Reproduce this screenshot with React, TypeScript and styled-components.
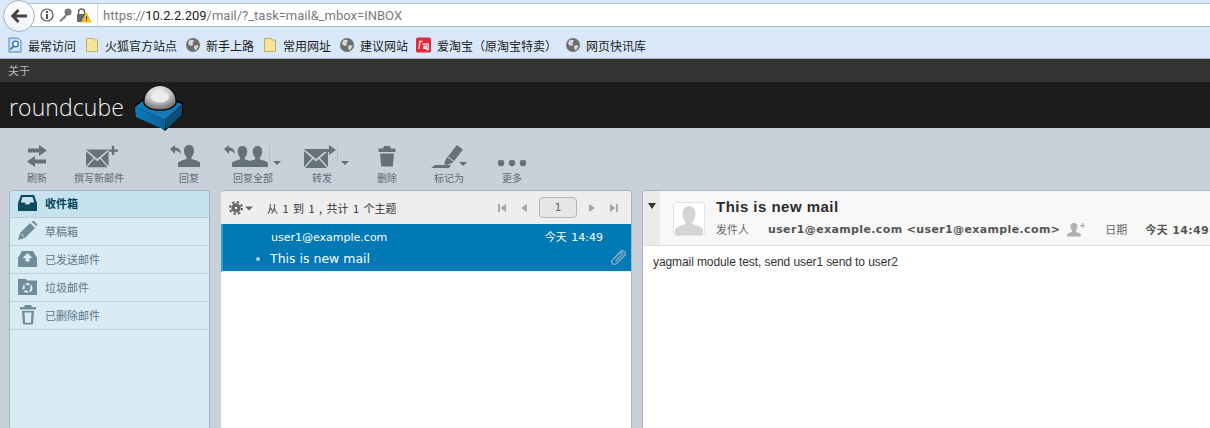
import React from 'react';
import styled, { createGlobalStyle } from 'styled-components';

const GlobalStyle = createGlobalStyle`
  html, body {
    margin: 0;
    padding: 0;
    background: #c8d1da;
    overflow: hidden;
  }
  * { box-sizing: border-box; }
`;

const CJK = `"DejaVu Sans", "Noto Sans CJK SC", sans-serif`;

const Page = styled.div`
  width: 1210px;
  height: 428px;
  overflow: hidden;
  font-family: ${CJK};
  display: flex;
  flex-direction: column;
`;

/* browser chrome */
const NavBar = styled.div`
  height: 27px;
  background: #dce9f7;
  padding-top: 3px;
  padding-left: 20px;
  position: relative;
`;

const UrlBar = styled.div`
  height: 24px;
  background: #fff;
  border-top: 1px solid #aebfd2;
  border-bottom: 1px solid #a3b5c9;
  display: flex;
  align-items: center;
  padding-left: 20px;
`;

const BackButton = styled.div`
  position: absolute;
  left: 3px;
  top: 0;
  width: 32px;
  height: 32px;
  border-radius: 50%;
  background: linear-gradient(#fff, #eef2f7);
  border: 1px solid #9fb2c8;
  display: flex;
  align-items: center;
  justify-content: center;
  z-index: 2;
`;

const UrlIcons = styled.div`
  display: flex;
  align-items: center;
  gap: 4px;
  width: 58px;
  height: 22px;
  border-right: 1px solid #d6d6d6;
  margin-right: 5px;
`;

const UrlText = styled.div`
  font-family: "Roboto", sans-serif;
  font-size: 13px;
  color: #7a7a80;
  white-space: nowrap;
  b {
    font-weight: 400;
    color: #222;
  }
`;

const BookmarkBar = styled.div`
  height: 32px;
  background: #d9e8f8;
  border-bottom: 1px solid #a6b4c2;
  display: flex;
  align-items: center;
  gap: 9px;
  padding-left: 8px;
  padding-top: 5px;
`;

const Bookmark = styled.div<{ $gap?: number }>`
  display: flex;
  align-items: center;
  gap: 6px;
  margin-left: ${p => p.$gap ?? 0}px;
  font-family: "Noto Sans CJK SC", sans-serif;
  font-size: 12px;
  color: #1a1a1a;
  white-space: nowrap;
`;

/* page header */
const AboutBar = styled.div`
  height: 23px;
  background: #353535;
  color: #b9b9b9;
  font-family: "Noto Sans CJK SC", sans-serif;
  font-size: 11px;
  line-height: 23px;
  padding-left: 8px;
`;

const Header = styled.div`
  height: 46px;
  flex: none;
  background: #1c1c1c;
  display: flex;
  align-items: flex-start;
  padding-left: 9px;
  padding-top: 3px;
`;

const LogoText = styled.span`
  width: 125px;
  flex: none;
  font-family: "Open Sans", sans-serif;
  font-weight: 300;
  font-size: 23px;
  line-height: 44px;
  letter-spacing: 0.1px;
  color: #f0f0f0;
`;

const LogoMark = styled.svg`
  overflow: visible;
  flex: none;
  position: relative;
  z-index: 3;
`;

/* toolbar */
const Toolbar = styled.div`
  height: 62px;
  flex: none;
  display: flex;
  padding-left: 10px;
`;

const ToolButton = styled.div<{ $width: number; $gap?: number }>`
  width: ${p => p.$width}px;
  margin-left: ${p => p.$gap ?? 0}px;
  display: flex;
  flex-direction: column;
  align-items: center;
  padding-top: 14px;
  position: relative;
  svg { display: block; }
`;

const IconSlot = styled.div<{ $shift?: number }>`
  height: 28px;
  display: flex;
  align-items: center;
  justify-content: center;
  margin-right: ${p => p.$shift ?? 0}px;
`;

const ToolLabel = styled.span`
  font-family: "Noto Sans CJK SC", sans-serif;
  font-size: 10px;
  line-height: 14px;
  margin-top: 1px;
  color: #5f6a72;
  white-space: nowrap;
`;

const DropArrow = styled.i<{ $right: number; $top?: number }>`
  position: absolute;
  right: ${p => p.$right}px;
  top: ${p => p.$top ?? 33}px;
  width: 0;
  height: 0;
  border-left: 4px solid transparent;
  border-right: 4px solid transparent;
  border-top: 4px solid #5f6a72;
`;

const Separator = styled.i<{ $right: number }>`
  position: absolute;
  right: ${p => p.$right}px;
  top: 13px;
  height: 26px;
  width: 1px;
  background: linear-gradient(#c8d1da, #aab4bc, #c8d1da);
`;

const Dots = styled.svg`
  margin-top: 14px;
`;

/* three panes */
const Panes = styled.div`
  flex: 1;
  display: flex;
  padding-left: 9px;
  min-height: 0;
`;

const FolderPane = styled.div`
  width: 201px;
  flex: none;
  background: #d9ebf3;
  border: 1px solid #aab4bc;
  border-bottom: none;
  border-radius: 4px 4px 0 0;
  overflow: hidden;
`;

const FolderRow = styled.div<{ $selected?: boolean }>`
  height: 28px;
  display: flex;
  align-items: center;
  gap: 8px;
  padding: 0 0 2px 8px;
  background: ${p => (p.$selected ? '#c6e2ef' : 'transparent')};
  border-bottom: 1px solid #bcd0d9;
  font-family: "Noto Sans CJK SC", sans-serif;
  font-size: 11px;
  font-weight: ${p => (p.$selected ? 700 : 400)};
  color: ${p => (p.$selected ? '#004458' : '#5b7886')};
  &:first-child {
    height: 27px;
  }
`;

const FolderIcon = styled.span`
  width: 19px;
  height: 22px;
  display: flex;
  align-items: center;
  justify-content: center;
  flex: none;
`;

const ListPane = styled.div`
  width: 411px;
  flex: none;
  margin-left: 11px;
  background: #fff;
  border: 1px solid #aab4bc;
  border-left: none;
  border-bottom: none;
  border-radius: 4px 4px 0 0;
  overflow: hidden;
`;

const ListToolbar = styled.div`
  height: 33px;
  background: #eeeeee;
  display: flex;
  align-items: center;
  padding-left: 8px;
`;

const ListCount = styled.span`
  margin-left: 14px;
  font-family: "Noto Sans CJK SC", sans-serif;
  font-size: 11px;
  word-spacing: 2px;
  color: #333;
  flex: 1;
`;

const Pager = styled.div`
  display: flex;
  align-items: center;
  margin-right: 12px;
`;

const PagerIcon = styled.svg<{ $gap?: number }>`
  margin-right: ${p => p.$gap ?? 0}px;
`;

const PageBox = styled.span`
  width: 38px;
  height: 21px;
  margin: 0 11px;
  border: 1px solid #b4b4b4;
  border-radius: 4px;
  background: #e6e6e6;
  text-align: center;
  font-size: 11px;
  line-height: 19px;
  color: #666;
`;

const MessageRow = styled.div`
  height: 48px;
  background: #0079b5;
  border-left: 2px solid #28a5cf;
  border-bottom: 1px solid #e8f0f4;
  color: #fff;
  position: relative;
`;

const SenderLine = styled.div`
  display: flex;
  justify-content: space-between;
  padding: 6px 28px 0 48px;
  font-size: 11px;
  line-height: 15px;
  word-spacing: 1px;
`;

const SubjectLine = styled.div`
  display: flex;
  align-items: center;
  padding: 5px 0 0 33px;
  font-size: 12.5px;
  line-height: 18px;
  &::before {
    content: '';
    width: 4px;
    height: 4px;
    border-radius: 50%;
    background: #a9d3e6;
    margin-right: 10px;
  }
`;

const Clip = styled.svg`
  position: absolute;
  right: 4px;
  top: 24px;
`;

const PreviewPane = styled.div`
  width: 580px;
  flex: none;
  margin-left: 10px;
  background: #fff;
  border: 1px solid #aab4bc;
  border-right: none;
  border-bottom: none;
  border-radius: 4px 0 0 0;
  overflow: hidden;
`;

const PreviewHeader = styled.div`
  height: 55px;
  background: #f8f8f8;
  border-bottom: 1px solid #dcdcdc;
  display: flex;
`;

const Toggle = styled.div`
  width: 17px;
  flex: none;
  background: #ebebeb;
  padding: 12px 0 0 5px;
  &::before {
    content: '';
    display: block;
    width: 0;
    height: 0;
    border-left: 4px solid transparent;
    border-right: 4px solid transparent;
    border-top: 6px solid #333;
  }
`;

const Avatar = styled.div`
  width: 32px;
  height: 34px;
  flex: none;
  margin: 11px 11px 0 13px;
  background: #fff;
  border: 1px solid #e2e2e2;
  border-radius: 3px;
  overflow: hidden;
`;

const HeaderText = styled.div`
  flex: 1;
  min-width: 0;
`;

const Subject = styled.div`
  font-family: "Liberation Sans", sans-serif;
  font-size: 15px;
  font-weight: 700;
  line-height: 18px;
  margin-top: 7px;
  letter-spacing: 0.47px;
  color: #2c2c2c;
`;

const HeaderMeta = styled.div`
  display: flex;
  align-items: center;
  margin-top: 4px;
  height: 18px;
  white-space: nowrap;
`;

const MetaLabel = styled.span<{ $width: number }>`
  width: ${p => p.$width}px;
  flex: none;
  font-family: "Noto Sans CJK SC", sans-serif;
  font-size: 11px;
  color: #666;
`;

const MetaValue = styled.span`
  flex: none;
  font-size: 11px;
  font-weight: 700;
  letter-spacing: 0.37px;
  color: #555;
`;

const AddContact = styled.svg`
  margin: 0 20px 0 7px;
  flex: none;
`;

const MessageBody = styled.div`
  padding: 8px 10px;
  font-family: "Liberation Sans", sans-serif;
  font-size: 12px;
  letter-spacing: -0.09px;
  line-height: 16px;
  color: #333;
`;

/* drawings */
const Globe = () => (
  <svg width="14" height="14" viewBox="0 0 14 14">
    <circle cx="7" cy="7" r="7" fill="#6e6e6e" />
    <path d="M3 2.500c2-1 4-1 5 0L6.500 5 7 7 4.500 8 2 6zM8 8l3-1 1.500 1L10 12.500 8.500 11z" fill="#d8d8d8" />
  </svg>
);

const Folder = () => (
  <svg width="14" height="16" viewBox="0 0 14 16">
    <path d="M1.500 1.500h7l1 1.500h3v11.500h-11z" fill="#f5e59b" stroke="#c2ac5e" />
  </svg>
);

const ReplyArrow = ({ x, y }: { x: number; y: number }) => (
  <path
    transform={`translate(${x} ${y})`}
    d="M0 4 5 0v2.500c4 .2 6 2.800 6 7-1-2.500-3-3.700-6-3.700V9z"
    fill="#66727a"
  />
);

const Person = ({ x, y, s = 1 }: { x: number; y: number; s?: number }) => (
  <path
    transform={`translate(${x} ${y}) scale(${s})`}
    d="M11 0c3 0 5 2 5 5.500 0 3-1 5-2.500 6.500v2c3 1 7 2 8.500 3.500V22H0v-4.500C1.500 16 5.500 15 8.500 14v-2C7 10.500 6 8.500 6 5.500 6 2 8 0 11 0z"
    fill="#66727a"
  />
);

const Envelope = ({ x = 0, y = 0 }: { x?: number; y?: number }) => (
  <g transform={`translate(${x} ${y})`}>
    <path d="M0 0h24L12 10z" fill="#66727a" />
    <path d="M0 2v16l8-9zM24 2v16l-8-9zM1 19h22l-8-9-3 2.500L9 10z" fill="#66727a" />
  </g>
);

export default function App() {
  return (
    <Page>
      <GlobalStyle />
      <NavBar>
        <BackButton>
          <svg width="16" height="14" viewBox="0 0 16 14">
            <path d="M7.500 1 1.800 7l5.700 6M2 7h14" fill="none" stroke="#444" strokeWidth="3" />
          </svg>
        </BackButton>
        <UrlBar>
          <UrlIcons>
            <svg width="14" height="14" viewBox="0 0 14 14">
              <circle cx="7" cy="7" r="6" fill="none" stroke="#555" strokeWidth="1.200" />
              <path d="M6 6h2v5H6zM6 3h2v2H6z" fill="#555" />
            </svg>
            <svg width="14" height="14" viewBox="0 0 14 14">
              <circle cx="10" cy="4" r="3.500" fill="#777" />
              <path d="M8 6 1.500 12.500v1h2l1-1v-1h1.500l3-4z" fill="#777" />
            </svg>
            <svg width="16" height="15" viewBox="0 0 16 15">
              <path d="M2.500 6V4a3 3 0 0 1 6 0v2" fill="none" stroke="#666" strokeWidth="1.500" />
              <rect x="1" y="6" width="9" height="8" rx="1" fill="#666" />
              <path d="M10.500 4 16 14.500H5z" fill="#f8c21c" />
              <path d="M10 8h1v3.500h-1zM10 12h1v1h-1z" fill="#333" />
            </svg>
          </UrlIcons>
          <UrlText>
            https://<b>10.2.2.209</b>/mail/?_task=mail&amp;_mbox=INBOX
          </UrlText>
        </UrlBar>
      </NavBar>

      <BookmarkBar>
        <Bookmark>
          <svg width="14" height="16" viewBox="0 0 14 16">
            <path d="M1 1h9l3 3v11H1z" fill="#cfe3f7" stroke="#4f86bd" />
            <circle cx="7.500" cy="7" r="2.800" fill="#fff" stroke="#2f6faa" strokeWidth="1.300" />
            <path d="M5.500 9 2.500 12.500" stroke="#2f6faa" strokeWidth="1.700" />
          </svg>
          最常访问
        </Bookmark>
        <Bookmark>
          <Folder />
          火狐官方站点
        </Bookmark>
        <Bookmark>
          <Globe />
          新手上路
        </Bookmark>
        <Bookmark>
          <Folder />
          常用网址
        </Bookmark>
        <Bookmark>
          <Globe />
          建议网站
        </Bookmark>
        <Bookmark $gap={-1}>
          <svg width="15" height="16" viewBox="0 0 16 16">
            <rect width="16" height="16" rx="2" fill="#e5283a" />
            <path d="M3 4h4M4.500 4 3 12M7 7h6v6h-2M8.500 9.500h2.500v2H8.500z" fill="none" stroke="#fff" strokeWidth="1.300" />
          </svg>
          爱淘宝（原淘宝特卖）
        </Bookmark>
        <Bookmark>
          <Globe />
          网页快讯库
        </Bookmark>
      </BookmarkBar>

      <AboutBar>关于</AboutBar>

      <Header>
        <LogoText>roundcube</LogoText>
        <LogoMark width="50" height="46" viewBox="0 0 50 46">
          <defs>
            <radialGradient id="dome" cx="0.45" cy="0.3" r="0.7">
              <stop offset="0" stopColor="#fafafa" />
              <stop offset="0.55" stopColor="#c4c4c4" />
              <stop offset="1" stopColor="#707070" />
            </radialGradient>
            <linearGradient id="side" x1="0" y1="0" x2="1" y2="0">
              <stop offset="0" stopColor="#0b7cc0" />
              <stop offset="1" stopColor="#0a5f96" />
            </linearGradient>
          </defs>
          <path d="M0 21 31 46 49 30V17L16 8z" fill="#000" />
          <path d="M1 22 16 10 48 19 31 35z" fill="#1578b8" />
          <path d="M1 22 31 35V45L2 32z" fill="url(#side)" />
          <path d="M31 35 48 19V30L32 45z" fill="#0d4d78" />
          <path d="M9 17a17 17 0 0 1 34 0c0 5-8 9-17 9S9 22 9 17z" fill="#111" />
          <path d="M10.500 16.500a15.500 15.500 0 0 1 31 0c0 4.500-7 8-15.500 8s-15.500-3.500-15.500-8z" fill="url(#dome)" />
          <ellipse cx="26" cy="12" rx="9" ry="5.500" fill="#ececec" />
        </LogoMark>
      </Header>

      <Toolbar>
        <ToolButton $width={54}>
          <IconSlot>
            <svg width="22" height="22" viewBox="0 0 22 22">
              <path d="M13 0l8 5.500-8 5.500V7.500H2v-4h11zM9 11v3.500h11v4H9V22L1 16.500z" fill="#66727a" />
            </svg>
          </IconSlot>
          <ToolLabel>刷新</ToolLabel>
        </ToolButton>
        <ToolButton $width={70}>
          <IconSlot $shift={-6}>
            <svg width="32" height="24" viewBox="0 0 34 24">
              <Envelope y={5} />
              <path d="M24 5h3.500V1h2.500v4H34v2.500h-4V11h-2.500V7.500H24z" fill="#66727a" />
            </svg>
          </IconSlot>
          <ToolLabel>撰写新邮件</ToolLabel>
        </ToolButton>
        <ToolButton $width={50} $gap={30}>
          <IconSlot $shift={6}>
            <svg width="32" height="24" viewBox="0 0 32 24">
              <ReplyArrow x={0} y={1} />
              <Person x={8} y={1} />
            </svg>
          </IconSlot>
          <ToolLabel>回复</ToolLabel>
        </ToolButton>
        <ToolButton $width={78}>
          <IconSlot $shift={14}>
            <svg width="44" height="24" viewBox="0 0 44 24">
              <ReplyArrow x={0} y={1} />
              <Person x={8} y={2} s={0.95} />
              <Person x={23} y={2} s={0.95} />
            </svg>
          </IconSlot>
          <ToolLabel>回复全部</ToolLabel>
          <Separator $right={22} />
          <DropArrow $right={11} />
        </ToolButton>
        <ToolButton $width={60}>
          <IconSlot $shift={4}>
            <svg width="32" height="24" viewBox="0 0 32 24">
              <Envelope y={5} />
              <path d="M16 5h9V1l7 5-7 5V8h-9z" fill="#66727a" />
            </svg>
          </IconSlot>
          <ToolLabel>转发</ToolLabel>
          <Separator $right={14} />
          <DropArrow $right={3} />
        </ToolButton>
        <ToolButton $width={70}>
          <IconSlot>
            <svg width="18" height="21" viewBox="0 0 18 21">
              <path d="M6 0h6l1 2.500h4.500V6H.5V2.500H5zM2 7.500h14l-1.200 13H3.200z" fill="#66727a" />
            </svg>
          </IconSlot>
          <ToolLabel>删除</ToolLabel>
        </ToolButton>
        <ToolButton $width={54}>
          <IconSlot $shift={4}>
            <svg width="33" height="24" viewBox="0 0 33 24">
              <path d="M0 24 4 21H20L18 24zM13 20l2-5L26 1l6 4.500-10 13-6 2.500z" fill="#66727a" />
              <path d="M17 13l6 4.500" stroke="#c8d1da" strokeWidth="1" />
            </svg>
          </IconSlot>
          <ToolLabel>标记为</ToolLabel>
          <DropArrow $right={9} $top={34} />
        </ToolButton>
        <ToolButton $width={72}>
          <IconSlot>
            <Dots width="30" height="8" viewBox="0 0 30 8">
              <circle cx="4" cy="4" r="3.200" fill="#66727a" />
              <circle cx="15" cy="4" r="3.200" fill="#66727a" />
              <circle cx="26" cy="4" r="3.200" fill="#66727a" />
            </Dots>
          </IconSlot>
          <ToolLabel>更多</ToolLabel>
        </ToolButton>
      </Toolbar>

      <Panes>
        <FolderPane>
          <FolderRow $selected>
            <FolderIcon>
              <svg width="19" height="16" viewBox="0 0 19 16">
                <path d="M3 0h13l3 8v8H0V8zM4.500 2 2.800 7.500h4l1 2h3.400l1-2h4L14.500 2z" fill="#0c4a60" fillRule="evenodd" />
              </svg>
            </FolderIcon>
            收件箱
          </FolderRow>
          <FolderRow>
            <FolderIcon>
              <svg width="19" height="19" viewBox="0 0 19 19">
                <path d="M0 19 2 12 12 2 17 7 7 17zM13.500 .5 15 0c1.500 0 4 2.500 4 4l-.5 1.500z" fill="#6f8d99" />
                <path d="M2.800 12.500 6.500 16.200" stroke="#d9ebf3" strokeWidth=".8" />
              </svg>
            </FolderIcon>
            草稿箱
          </FolderRow>
          <FolderRow>
            <FolderIcon>
              <svg width="19" height="17" viewBox="0 0 19 17">
                <path d="M4 1h11l4 7v9H0V8zM9.500 3 4.500 8h3v3.500h4V8h3z" fill="#6f8d99" fillRule="evenodd" />
              </svg>
            </FolderIcon>
            已发送邮件
          </FolderRow>
          <FolderRow>
            <FolderIcon>
              <svg width="19" height="17" viewBox="0 0 19 17">
                <path d="M0 1h8l1 1.500h10V17H0z" fill="#6f8d99" />
                <circle cx="9.500" cy="10" r="4" fill="none" stroke="#d9ebf3" strokeWidth="2" strokeDasharray="4 1.500" />
              </svg>
            </FolderIcon>
            垃圾邮件
          </FolderRow>
          <FolderRow>
            <FolderIcon>
              <svg width="16" height="20" viewBox="0 0 16 20">
                <path d="M5 0h6l1 2h4v2.500H0V2h4z" fill="#6f8d99" />
                <path d="M2 6h12l-1 13.500H3zM4.500 7.500l.6 10.200h5.800l.6-10.200z" fill="#6f8d99" fillRule="evenodd" />
              </svg>
            </FolderIcon>
            已删除邮件
          </FolderRow>
        </FolderPane>

        <ListPane>
          <ListToolbar>
            <svg width="24" height="14" viewBox="0 0 24 14">
              <circle cx="7" cy="7" r="3" fill="none" stroke="#666" strokeWidth="3.400" />
              <circle cx="7" cy="7" r="6" fill="none" stroke="#666" strokeWidth="2" strokeDasharray="2.500 2.200" />
              <path d="M16 5.500h8l-4 4z" fill="#666" />
            </svg>
            <ListCount>从 1 到 1 , 共计 1 个主题</ListCount>
            <Pager>
              <PagerIcon $gap={13} width="10" height="10" viewBox="0 0 10 10">
                <path d="M1 1h2v8H1zM9 1v8L3.500 5z" fill="#a8a8a8" />
              </PagerIcon>
              <PagerIcon width="8" height="10" viewBox="0 0 8 10">
                <path d="M7 1v8L1 5z" fill="#a8a8a8" />
              </PagerIcon>
              <PageBox>1</PageBox>
              <PagerIcon $gap={13} width="8" height="10" viewBox="0 0 8 10">
                <path d="M1 1v8l6-4z" fill="#a8a8a8" />
              </PagerIcon>
              <PagerIcon width="10" height="10" viewBox="0 0 10 10">
                <path d="M9 1H7v8h2zM1 1v8l5.500-4z" fill="#a8a8a8" />
              </PagerIcon>
            </Pager>
          </ListToolbar>
          <MessageRow>
            <SenderLine>
              <span>user1@example.com</span>
              <span>今天 14:49</span>
            </SenderLine>
            <SubjectLine>This is new mail</SubjectLine>
            <Clip width="17" height="17" viewBox="0 0 17 17">
              <path d="M3 11.500 11 3a3 3 0 0 1 4 4l-8.500 8.500a2.400 2.400 0 0 1-4-3.500L10 4.800a1.300 1.300 0 0 1 2 2L5.500 13" fill="none" stroke="#7fa9c1" strokeWidth="1.500" />
            </Clip>
          </MessageRow>
        </ListPane>

        <PreviewPane>
          <PreviewHeader>
            <Toggle />
            <Avatar>
              <svg width="30" height="32" viewBox="0 0 30 32">
                <path d="M15 3c4 0 6.500 3 6.500 8 0 3.500-1.500 6-3 8v2c4 1.500 9 2.500 10.500 5v6H1v-6c1.500-2.500 6.500-3.500 10.500-5v-2c-1.500-2-3-4.500-3-8 0-5 2.500-8 6.500-8z" fill="#d4d4d4" />
              </svg>
            </Avatar>
            <HeaderText>
              <Subject>This is new mail</Subject>
              <HeaderMeta>
                <MetaLabel $width={52}>发件人</MetaLabel>
                <MetaValue>user1@example.com &lt;user1@example.com&gt;</MetaValue>
                <AddContact width="18" height="15" viewBox="0 0 18 15">
                  <path d="M7 1c2.500 0 3.500 1.500 3.500 3.500 0 2-1 3.500-1.500 4v1.500c2 .8 4.500 1 5 3v1.500H0V13c.5-2 3-2.200 5-3V8.500C4.500 8 3.500 6.500 3.500 4.500 3.500 2.500 4.500 1 7 1zM13 3h2V1h1.300v2H18v1.300h-1.700V6H15V4.300h-2z" fill="#b0b0b0" />
                </AddContact>
                <MetaLabel $width={40}>日期</MetaLabel>
                <MetaValue>今天 14:49</MetaValue>
              </HeaderMeta>
            </HeaderText>
          </PreviewHeader>
          <MessageBody>yagmail module test, send user1 send to user2</MessageBody>
        </PreviewPane>
      </Panes>
    </Page>
  );
}
